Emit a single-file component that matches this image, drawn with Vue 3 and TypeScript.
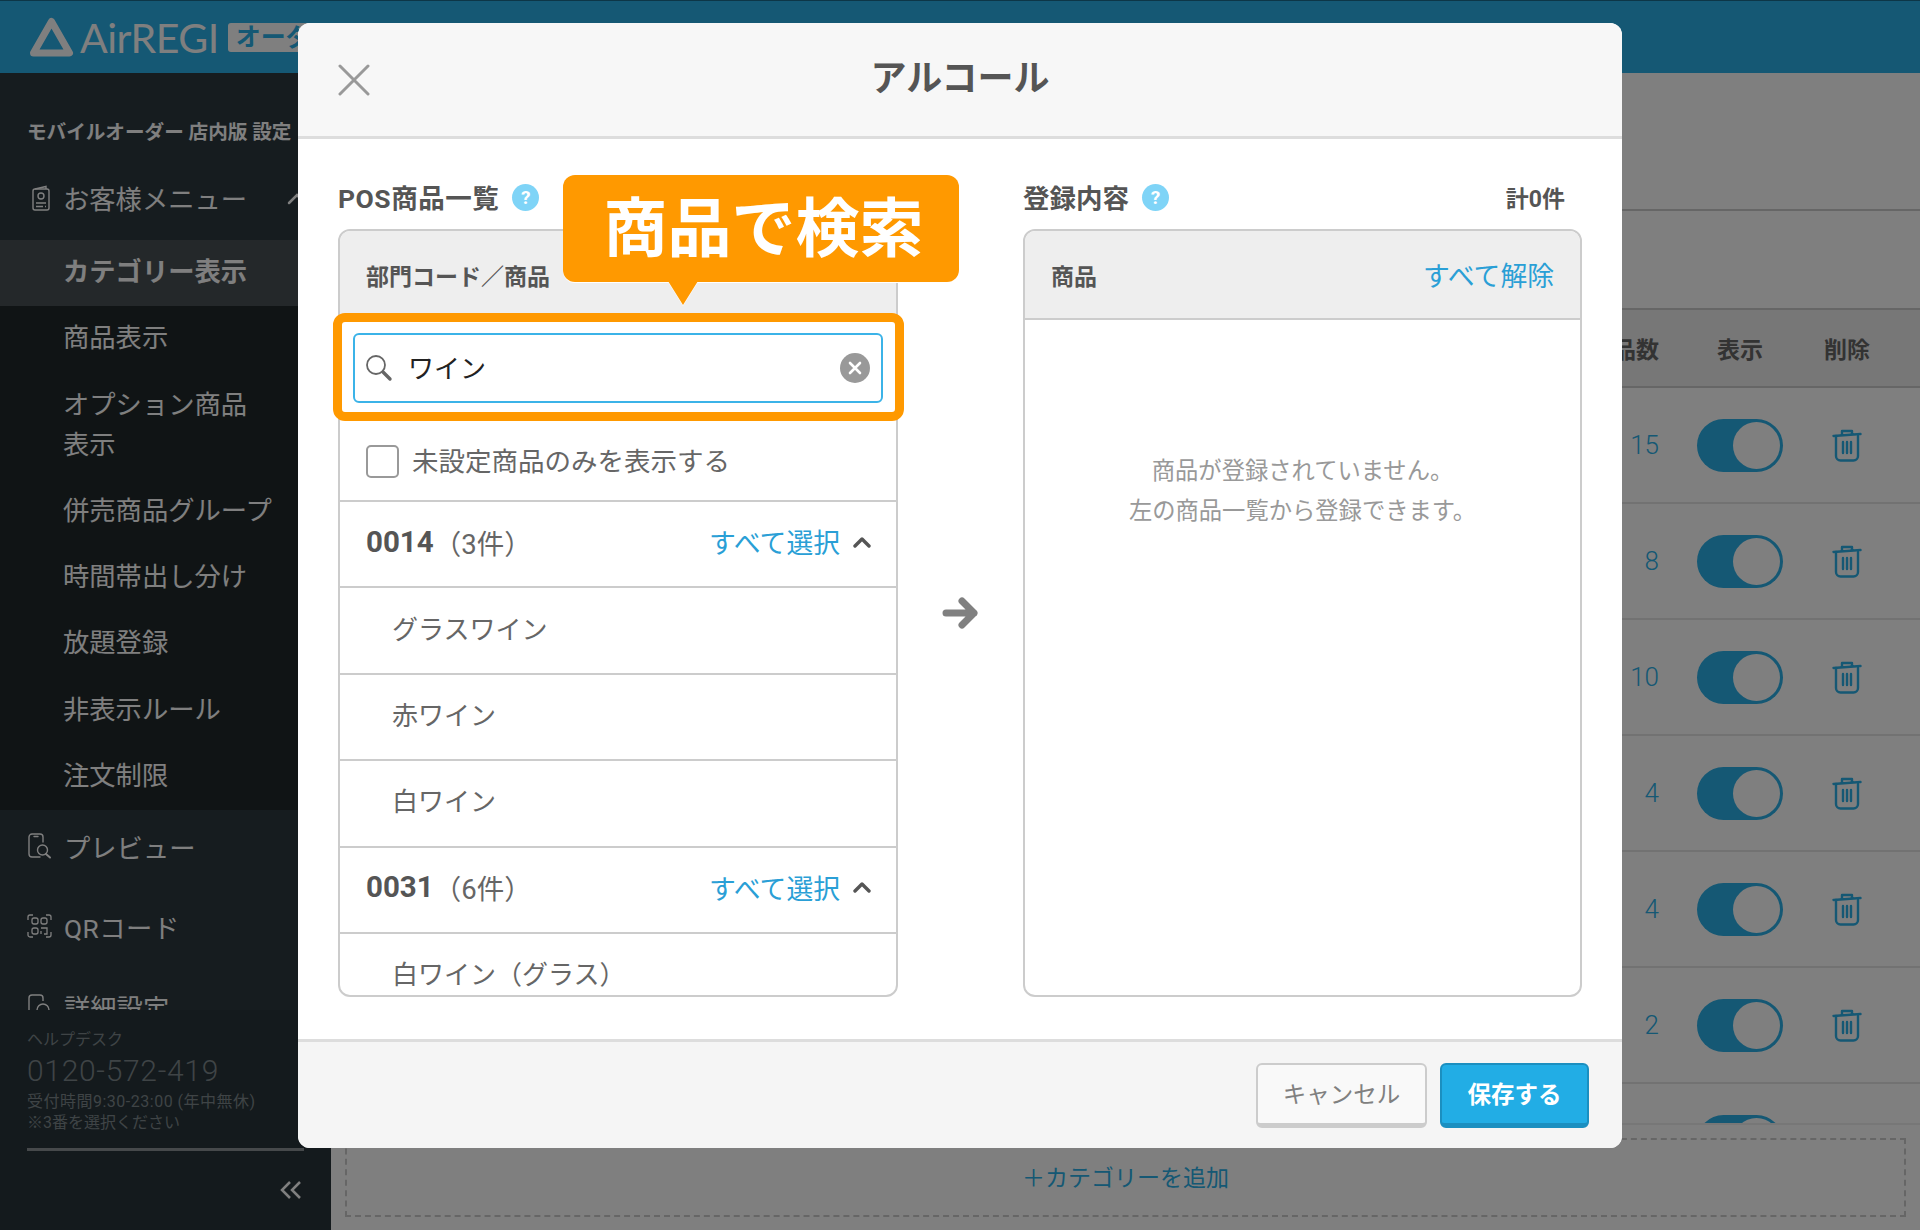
<script setup lang="ts">
const subMenu = ['商品表示', 'オプション商品\n表示', '併売商品グループ', '時間帯出し分け', '放題登録', '非表示ルール', '注文制限'];
const counts = [15, 8, 10, 4, 4, 2, 1];
const groupOne = ['グラスワイン', '赤ワイン', '白ワイン'];
</script>

<template>
  <div class="app">
    <header class="topbar">
      <svg class="logo-mark" width="44" height="40" viewBox="0 0 44 40" fill="none" stroke="#fff" stroke-width="7" stroke-linejoin="round">
        <path d="M21.500 4.500 L39.500 36 H3.500 Z" />
      </svg>
      <span class="logo-text">AirREGI</span>
      <span class="logo-badge">オーダー</span>
    </header>

    <div class="layout">
      <aside class="sidebar">
        <div class="nav">
          <p class="nav-title">モバイルオーダー 店内版 設定</p>
          <div class="nav-row nav-parent">
            <svg class="nav-icon" width="20" height="26" viewBox="0 0 20 26" fill="none" stroke="#fff" stroke-width="1.4">
              <rect x="2" y="4" width="16" height="21" rx="2" />
              <path d="M4 4 L15 1.5 V4" />
              <circle cx="10" cy="11" r="3" />
              <path d="M5 18h10M5 21.500h7M14 21.500h1" />
            </svg>
            <span>お客様メニュー</span>
            <svg class="nav-chevron" width="20" height="12" viewBox="0 0 20 12" fill="none" stroke="#fff" stroke-width="2.500" stroke-linecap="round">
              <path d="M2 10 L10 2 L18 10" />
            </svg>
          </div>
          <ul class="submenu">
            <li class="sub-row active">カテゴリー表示</li>
            <li v-for="item in subMenu" :key="item" class="sub-row" :class="{ tall: item.includes('\n') }">{{ item }}</li>
          </ul>
          <div class="nav-row">
            <svg class="nav-icon" width="25" height="26" viewBox="0 0 25 26" fill="none" stroke="#fff" stroke-width="1.4" stroke-linecap="round">
              <path d="M13 24 H5 a3 3 0 0 1 -3 -3 V4 a3 3 0 0 1 3 -3 h8 a3 3 0 0 1 3 3 v5" />
              <path d="M7 3.500h4" />
              <circle cx="15.500" cy="17" r="5" />
              <path d="M19 21 l4 3.500" stroke-width="2" />
            </svg>
            <span>プレビュー</span>
          </div>
          <div class="nav-row">
            <svg class="nav-icon" width="25" height="24" viewBox="0 0 25 24" fill="none" stroke="#fff" stroke-width="1.300">
              <path d="M1 6 V3 a2 2 0 0 1 2 -2 h3 M19 1 h3 a2 2 0 0 1 2 2 v3 M24 18 v3 a2 2 0 0 1 -2 2 h-3 M6 23 H3 a2 2 0 0 1 -2 -2 v-3" />
              <rect x="5" y="4" width="6" height="6" rx="2" />
              <rect x="14" y="4" width="6" height="6" rx="2" />
              <rect x="5" y="14" width="6" height="6" rx="2" />
              <path d="M14 14 h6 v6 h-3 M14 17 v3" />
            </svg>
            <span class="qr-label">QRコード</span>
          </div>
          <div class="nav-row">
            <svg class="nav-icon" width="25" height="26" viewBox="0 0 25 26" fill="none" stroke="#fff" stroke-width="1.400">
              <path d="M2 24 V5 a3 3 0 0 1 3 -3 h8 a3 3 0 0 1 3 3 v3" />
              <circle cx="16" cy="17" r="6" />
            </svg>
            <span>詳細設定</span>
          </div>
        </div>
        <div class="help">
          <p class="help-label">ヘルプデスク</p>
          <p class="help-tel">0120-572-419</p>
          <p class="help-note help-hours">受付時間9:30-23:00 (年中無休)</p>
          <p class="help-note">※3番を選択ください</p>
          <div class="help-line"></div>
          <div class="collapse">
            <svg width="22" height="18" viewBox="0 0 22 18" fill="none" stroke="#fff" stroke-width="2.500">
              <path d="M10 1 L2 9 L10 17 M20 1 L12 9 L20 17" />
            </svg>
          </div>
        </div>
      </aside>

      <main class="content">
        <div class="content-top"></div>
        <div class="content-band"></div>
        <div class="table-head">
          <span class="cell-count head-count">商品数</span>
          <span class="cell-toggle">表示</span>
          <span class="cell-delete">削除</span>
        </div>
        <div v-for="(n, i) in counts" :key="i" class="table-row">
          <span class="cell-count count-value">{{ n }}</span>
          <span class="cell-toggle">
            <span class="toggle"><span class="knob"></span></span>
          </span>
          <span class="cell-delete">
            <svg width="30" height="33" viewBox="0 0 30 33" fill="none" stroke="#2ab0e8" stroke-width="2.400" stroke-linejoin="round" stroke-linecap="round">
              <path d="M1.500 7 L28.500 5 M10 5.500 V2 H20 V5" />
              <path d="M4 7 V27 a4.500 4.500 0 0 0 4.500 4.500 H21.500 a4.500 4.500 0 0 0 4.500 -4.500 V7" />
              <path d="M11 13 V24 M15 13 V24 M19 13 V24" />
            </svg>
          </span>
        </div>
        <div class="add-bar">
          <div class="add-box">＋カテゴリーを追加</div>
        </div>
      </main>
    </div>

    <div class="overlay">
      <section class="modal">
        <div class="modal-head">
          <svg class="close" width="32" height="32" viewBox="0 0 32 32" fill="none" stroke="#999" stroke-width="3" stroke-linecap="round">
            <path d="M2 2 L30 30 M30 2 L2 30" />
          </svg>
          <h1 class="modal-title">アルコール</h1>
        </div>

        <div class="modal-body">
          <div class="col">
            <div class="col-label">
              <span class="pos-label">POS商品一覧</span>
              <span class="hint">?</span>
            </div>
            <div class="panel">
              <div class="panel-head">部門コード／商品</div>
              <div class="search">
                <svg width="28" height="28" viewBox="0 0 28 28" fill="none" stroke="#666" stroke-width="1.800">
                  <circle cx="11" cy="11" r="9" />
                  <path d="M18 18 L25 25" stroke-width="3.400" stroke-linecap="round" />
                </svg>
                <input class="search-input" type="text" value="ワイン" />
                <svg width="30" height="30" viewBox="0 0 30 30">
                  <circle cx="15" cy="15" r="15" fill="#999" />
                  <path d="M10 10 L20 20 M20 10 L10 20" stroke="#fff" stroke-width="2.600" stroke-linecap="round" />
                </svg>
              </div>
              <label class="only-unset">
                <span class="checkbox"></span>
                <span class="only-unset-text">未設定商品のみを表示する</span>
              </label>
              <div class="group-row">
                <span class="group-code">0014</span>
                <span class="group-num">（3件）</span>
                <span class="select-all">すべて選択</span>
                <svg width="18" height="12" viewBox="0 0 18 12" fill="none" stroke="#555" stroke-width="3.400" stroke-linecap="round" stroke-linejoin="round">
                  <path d="M2 10 L9 3 L16 10" />
                </svg>
              </div>
              <div v-for="name in groupOne" :key="name" class="item-row">{{ name }}</div>
              <div class="group-row">
                <span class="group-code">0031</span>
                <span class="group-num">（6件）</span>
                <span class="select-all">すべて選択</span>
                <svg width="18" height="12" viewBox="0 0 18 12" fill="none" stroke="#555" stroke-width="3.400" stroke-linecap="round" stroke-linejoin="round">
                  <path d="M2 10 L9 3 L16 10" />
                </svg>
              </div>
              <div class="item-row">白ワイン（グラス）</div>
            </div>
          </div>

          <div class="mid">
            <svg width="37" height="32" viewBox="0 0 37 32" fill="none" stroke="#808080" stroke-width="7" stroke-linecap="round" stroke-linejoin="round">
              <path d="M4 16 H32 M20 4 L32 16 L20 28" />
            </svg>
          </div>

          <div class="col col-right">
            <div class="col-label">
              <span>登録内容</span>
              <span class="hint">?</span>
              <span class="total">計0件</span>
            </div>
            <div class="panel">
              <div class="panel-head panel-head-right">
                <span>商品</span>
                <span class="clear-all">すべて解除</span>
              </div>
              <div class="empty">
                <p>商品が登録されていません。</p>
                <p>左の商品一覧から登録できます。</p>
              </div>
            </div>
          </div>
        </div>

        <div class="modal-foot">
          <button class="btn btn-cancel">キャンセル</button>
          <button class="btn btn-save">保存する</button>
        </div>

        <div class="highlight"></div>
        <div class="callout">商品で検索</div>
      </section>
    </div>
  </div>
</template>

<style>
body {
  margin: 0;
}
</style>

<style scoped>
.app {
  position: relative;
  width: 1920px;
  height: 1230px;
  overflow: hidden;
  display: flex;
  flex-direction: column;
  background: #fff;
  font-family: Roboto, "Noto Sans CJK JP", sans-serif;
  color: #555;
}

p,
h1,
ul {
  margin: 0;
  padding: 0;
}

.topbar {
  height: 73px;
  flex: none;
  box-sizing: border-box;
  border-top: 1px solid #1a6c8e;
  background: #2ab0e8;
  display: flex;
  align-items: center;
  padding: 0 0 0 30px;
  color: #fff;
}

.logo-mark {
  flex: none;
}

.logo-text {
  margin-left: 6px;
  font-family: Lato, sans-serif;
  font-size: 41px;
  font-weight: 400;
  letter-spacing: -0.5px;
}

.logo-badge {
  margin-left: 9px;
  background: #fff;
  color: #2ab0e8;
  font-size: 25px;
  font-weight: 700;
  line-height: 29px;
  padding: 0 8px;
  border-radius: 3px;
  white-space: nowrap;
}

.layout {
  flex: 1;
  min-height: 0;
  display: flex;
}

.sidebar {
  width: 331px;
  flex: none;
  display: flex;
  flex-direction: column;
  background: #2c383e;
  color: #fff;
}

.nav {
  height: 937px;
  flex: none;
  overflow: hidden;
}

.nav-title {
  height: 88px;
  box-sizing: border-box;
  padding: 48px 0 0 27px;
  font-size: 19.600px;
  line-height: 24px;
  font-weight: 700;
  white-space: nowrap;
}

.nav-row {
  position: relative;
  height: 80px;
  box-sizing: border-box;
  padding: 0 0 8px 27px;
  display: flex;
  align-items: center;
  font-size: 26.300px;
}

.nav-parent {
  height: 79px;
  padding-bottom: 6px;
}

.nav-icon {
  flex: none;
  margin-right: 12px;
}

.nav-parent .nav-icon {
  margin: 0 12px 0 4px;
}

.qr-label {
  letter-spacing: 0.5px;
}

.nav-chevron {
  position: absolute;
  left: 287px;
  top: 32px;
}

.submenu {
  list-style: none;
  background: #20282a;
}

.sub-row {
  height: 66.3px;
  box-sizing: border-box;
  padding: 0 0 2px 63px;
  font-size: 26.300px;
  line-height: 40px;
  display: flex;
  align-items: center;
  white-space: pre-line;
}

.sub-row.tall {
  height: 106px;
}

.sub-row.active {
  background: #485054;
  font-weight: 700;
}

.help {
  flex: 1;
  position: relative;
  background: #28343a;
  padding: 19px 27px 0 27px;
  color: #7e888c;
}

.help-label {
  font-size: 16px;
  line-height: 22px;
}

.help-tel {
  font-size: 30px;
  font-weight: 300;
  line-height: 40px;
  letter-spacing: 0.7px;
}

.help-note {
  font-size: 16px;
  line-height: 21px;
  white-space: nowrap;
}

.help-hours {
  letter-spacing: 0.5px;
}

.help-line {
  margin-top: 15px;
  height: 3px;
  background: #8c9296;
}

.collapse {
  display: flex;
  justify-content: flex-end;
  margin: 30px 2px 0 0;
}

.content {
  flex: 1;
  min-width: 0;
  position: relative;
  overflow: hidden;
}

.content-top {
  height: 138px;
  border-bottom: 2px solid #ccc;
  box-sizing: border-box;
}

.content-band {
  height: 99px;
  border-bottom: 2px solid #ccc;
  box-sizing: border-box;
}

.table-head {
  height: 78px;
  box-sizing: border-box;
  background: #eee;
  border-bottom: 2px solid #ccc;
  display: flex;
  justify-content: flex-end;
  align-items: center;
  padding-right: 19px;
  font-size: 23px;
  font-weight: 700;
  color: #666;
}

.table-row {
  height: 116px;
  flex: none;
  box-sizing: border-box;
  border-bottom: 2px solid #e5e5e5;
  display: flex;
  justify-content: flex-end;
  align-items: center;
  padding-right: 19px;
}

.cell-count {
  width: 84px;
  box-sizing: border-box;
  text-align: right;
  padding-right: 28px;
}

.head-count {
  white-space: nowrap;
  direction: rtl;
}

.count-value {
  font-size: 26px;
  font-weight: 300;
  color: #2ab0e8;
}

.cell-toggle {
  width: 106px;
  display: flex;
  justify-content: center;
}

.cell-delete {
  width: 108px;
  display: flex;
  justify-content: center;
}

.toggle {
  width: 86px;
  height: 53px;
  box-sizing: border-box;
  padding: 3px;
  border-radius: 27px;
  background: #2ab0e8;
  display: flex;
  justify-content: flex-end;
}

.knob {
  width: 47px;
  height: 47px;
  border-radius: 50%;
  background: #fff;
}

.add-bar {
  position: absolute;
  left: 0;
  right: 0;
  bottom: 0;
  height: 107px;
  box-sizing: border-box;
  padding: 13px 14px 13px;
  background: #fff;
  border-top: 2px solid #eee;
}

.add-box {
  height: 100%;
  box-sizing: border-box;
  border: 2px dashed #ccc;
  padding-bottom: 4px;
  display: flex;
  align-items: center;
  justify-content: center;
  font-size: 23px;
  color: #2ab0e8;
}

.overlay {
  position: absolute;
  inset: 0;
  background: rgba(0, 0, 0, 0.5);
  display: flex;
  justify-content: center;
  align-items: flex-start;
  padding-top: 23px;
}

.modal {
  position: relative;
  width: 1324px;
  height: 1125px;
  background: #fff;
  border-radius: 12px;
  display: flex;
  flex-direction: column;
  overflow: hidden;
}

.modal-head {
  height: 116px;
  flex: none;
  box-sizing: border-box;
  background: #f7f7f7;
  border-bottom: 3px solid #ddd;
  display: grid;
  grid-template-columns: 1fr auto 1fr;
  align-items: center;
  padding: 0 40px;
}

.modal-title {
  font-size: 36px;
  font-weight: 700;
  line-height: 1;
  padding-bottom: 2px;
  color: #555;
}

.modal-body {
  flex: 1;
  display: flex;
  padding: 36px 40px 42px;
  min-height: 0;
}

.col {
  width: 560px;
  flex: none;
  display: flex;
  flex-direction: column;
}

.col-right {
  width: 559px;
}

.col-label {
  height: 54px;
  flex: none;
  padding-bottom: 11px;
  box-sizing: border-box;
  display: flex;
  align-items: center;
  gap: 13px;
  font-size: 26.500px;
  font-weight: 700;
  color: #555;
}

.pos-label {
  letter-spacing: 0.5px;
}

.hint {
  width: 27px;
  height: 27px;
  margin-top: 1px;
  border-radius: 50%;
  background: #7fd4f7;
  color: #fff;
  font-size: 19px;
  line-height: 27px;
  text-align: center;
}

.total {
  margin-left: auto;
  padding-right: 17px;
  font-size: 23px;
}

.panel {
  flex: 1;
  min-height: 0;
  box-sizing: border-box;
  border: 2px solid #ccc;
  border-radius: 12px;
  overflow: hidden;
  background: #fff;
}

.panel-head {
  height: 89px;
  box-sizing: border-box;
  background: #eee;
  border-bottom: 2px solid #ccc;
  display: flex;
  align-items: center;
  padding: 0 26px;
  font-size: 23px;
  font-weight: 700;
  color: #555;
}

.panel-head-right {
  justify-content: space-between;
}

.clear-all {
  font-size: 26.800px;
  font-weight: 400;
  color: #2a9fd6;
}

.search {
  height: 70px;
  margin: 13px 13px 0;
  box-sizing: border-box;
  border: 2px solid #3bb3e8;
  border-radius: 6px;
  display: flex;
  align-items: center;
  padding: 0 11px 0 10px;
}

.search-input {
  flex: 1;
  min-width: 0;
  border: none;
  outline: none;
  background: none;
  padding: 0 0 3px 15px;
  font: inherit;
  font-size: 26px;
  color: #222;
}

.only-unset {
  height: 97px;
  box-sizing: border-box;
  display: flex;
  align-items: center;
  gap: 13px;
  padding: 20px 0 0 26px;
  font-size: 26.500px;
  color: #666;
}

.only-unset-text {
  padding-bottom: 5px;
}

.checkbox {
  width: 33px;
  height: 33px;
  box-sizing: border-box;
  border: 2px solid #999;
  border-radius: 5px;
  background: #fff;
}

.group-row,
.item-row {
  height: 86.400px;
  box-sizing: border-box;
  border-top: 2px solid #ccc;
  display: flex;
  align-items: center;
  padding-bottom: 7px;
  font-size: 26px;
  color: #666;
}

.group-row {
  padding: 0 25px 5px 26px;
}

.item-row {
  padding-left: 52px;
}

.group-code {
  font-size: 29.500px;
  font-weight: 700;
  color: #555;
}

.group-num {
  font-size: 27.500px;
}

.select-all {
  margin-left: auto;
  margin-right: 13px;
  font-size: 26.800px;
  color: #2a9fd6;
}

.mid {
  width: 125px;
  flex: none;
  display: flex;
  align-items: center;
  justify-content: center;
  padding-top: 54px;
}

.empty {
  padding-top: 131px;
  text-align: center;
  font-size: 23.300px;
  line-height: 40px;
  color: #999;
}

.modal-foot {
  height: 109px;
  flex: none;
  box-sizing: border-box;
  background: #f5f5f5;
  border-top: 3px solid #ddd;
  display: flex;
  justify-content: flex-end;
  gap: 13px;
  padding: 21px 33px 0 0;
}

.btn {
  height: 65px;
  box-sizing: border-box;
  border-radius: 6px;
  border-style: solid;
  border-width: 2px 2px 5px;
  font-family: inherit;
  font-size: 23.500px;
  padding: 0 0 3px;
}

.btn-cancel {
  width: 171px;
  background: #f9f9f9;
  border-color: #ccc;
  color: #808080;
}

.btn-save {
  width: 149px;
  background: #22ade5;
  border-color: #1b8fc0;
  color: #fff;
  font-weight: 700;
}

.highlight {
  position: absolute;
  left: 35px;
  top: 290px;
  width: 571px;
  height: 108px;
  box-sizing: border-box;
  border: 9px solid #ff9900;
  border-radius: 12px;
}

.callout {
  position: absolute;
  left: 265px;
  top: 152px;
  width: 396px;
  height: 107px;
  border-radius: 12px;
  background: #ff9900;
  color: #fff;
  font-size: 64px;
  font-weight: 700;
  line-height: 109px;
  text-align: center;
  text-indent: 5px;
  filter: drop-shadow(0 1px 0 #fff);
}

.callout::after {
  content: "";
  position: absolute;
  left: 105px;
  top: 106px;
  border-style: solid;
  border-width: 24px 15px 0;
  border-color: #ff9900 transparent transparent;
}
</style>
